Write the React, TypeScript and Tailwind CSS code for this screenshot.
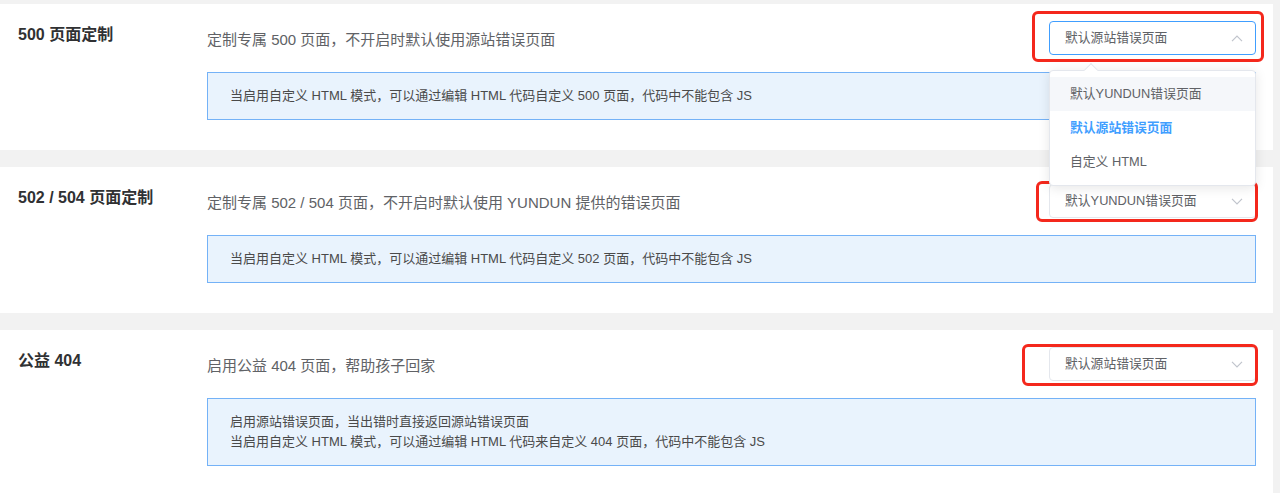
import React from 'react';

type Section = {
  id: string;
  title: string;
  description: string;
  tips: string[];
  value: string;
  open?: boolean;
  ring: string;
};

const sections: Section[] = [
  {
    id: '500',
    title: '500 页面定制',
    description: '定制专属 500 页面，不开启时默认使用源站错误页面',
    tips: ['当启用自定义 HTML 模式，可以通过编辑 HTML 代码自定义 500 页面，代码中不能包含 JS'],
    value: '默认源站错误页面',
    open: true,
    ring: '-left-[17px] -right-[8px] -top-[10px] -bottom-[7px]',
  },
  {
    id: '502',
    title: '502 / 504 页面定制',
    description: '定制专属 502 / 504 页面，不开启时默认使用 YUNDUN 提供的错误页面',
    tips: ['当启用自定义 HTML 模式，可以通过编辑 HTML 代码自定义 502 页面，代码中不能包含 JS'],
    value: '默认YUNDUN错误页面',
    ring: '-left-[13px] -right-[2px] -top-[3px] -bottom-[4px]',
  },
  {
    id: '404',
    title: '公益 404',
    description: '启用公益 404 页面，帮助孩子回家',
    tips: [
      '启用源站错误页面，当出错时直接返回源站错误页面',
      '当启用自定义 HTML 模式，可以通过编辑 HTML 代码来自定义 404 页面，代码中不能包含 JS',
    ],
    value: '默认源站错误页面',
    ring: '-left-[27px] -right-[2px] -top-[3px] -bottom-[5px]',
  },
];

const options = ['默认YUNDUN错误页面', '默认源站错误页面', '自定义 HTML'];

function Chevron({ up }: { up?: boolean }) {
  return (
    <svg width="12" height="7" viewBox="0 0 12 7" fill="none">
      <path
        d={up ? 'M1 6.2L6 1.2L11 6.2' : 'M1 0.8L6 5.8L11 0.8'}
        stroke="#c0c4cc"
        strokeWidth="1.2"
      />
    </svg>
  );
}

function ErrorPageSelect({ section }: { section: Section }) {
  return (
    <div className="relative w-[207px] shrink-0">
      <div
        className={`flex h-[34px] items-center justify-between rounded-[4px] border bg-white pl-[15px] pr-[12px] text-[12.8px] text-[#606266] ${
          section.open ? 'border-[#409eff]' : 'border-[#e4e7ed]'
        }`}
      >
        <span>{section.value}</span>
        <Chevron up={section.open} />
      </div>
      <div
        className={`pointer-events-none absolute rounded-[6px] border-[3px] border-[#f4281c] ${section.ring}`}
      />
      {section.open ? (
        <div className="absolute left-0 top-full z-20 mt-[15px] w-[207px] rounded-[4px] border border-[#e4e7ed] bg-white py-[6px] shadow-[0_2px_12px_rgba(0,0,0,0.1)]">
          <div className="absolute -top-[6px] left-[36px] h-[10px] w-[10px] rotate-45 border-l border-t border-[#e4e7ed] bg-white" />
          {options.map((option) => (
            <div
              key={option}
              className={`relative flex h-[34px] items-center px-[20px] text-[12.8px] ${
                option === section.value
                  ? 'font-bold text-[#409eff]'
                  : 'text-[#606266]'
              } ${option === '默认YUNDUN错误页面' ? 'bg-[#f5f7fa]' : ''}`}
            >
              {option}
            </div>
          ))}
        </div>
      ) : null}
    </div>
  );
}

export default function App() {
  return (
    <div className="min-h-[493px] bg-[#f2f2f2] pr-[7px] pt-[4px] font-['Liberation_Sans','Noto_Sans_CJK_SC',sans-serif]">
      <div className="flex flex-col gap-[17px]">
        {sections.map((section) => (
          <div key={section.id} className="flex bg-white pb-[30px] pt-[17px]">
            <div className="w-[207px] shrink-0 pl-[18px] pt-[3px]">
              <p className="text-[16px] font-semibold leading-[22px] text-[#303133]">
                {section.title}
              </p>
            </div>
            <div className="min-w-0 flex-1 pr-[17px]">
              <div className="flex h-[34px] items-center justify-between">
                <p className="mt-[4px] text-[15px] text-[#606266]">{section.description}</p>
                <ErrorPageSelect section={section} />
              </div>
              <div className="mt-[17px] border border-[#74b2f7] bg-[#e9f3fd] px-[22px] py-[13px] text-[13px] leading-[20px] text-[#4a4a4a]">
                {section.tips.map((tip) => (
                  <p key={tip}>{tip}</p>
                ))}
              </div>
            </div>
          </div>
        ))}
      </div>
    </div>
  );
}
